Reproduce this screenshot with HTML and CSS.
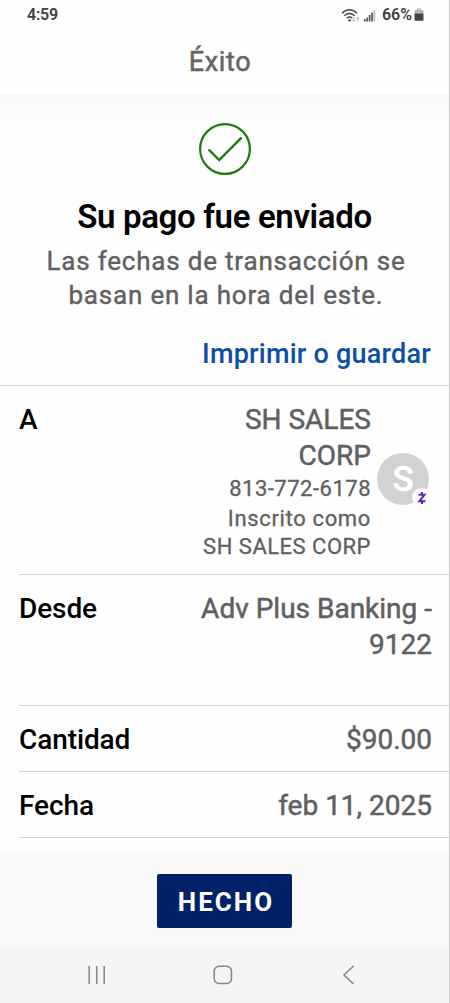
FILE: index.html
```
<!DOCTYPE html>
<html lang="es">
<head>
<meta charset="utf-8">
<title>Éxito</title>
<link rel="stylesheet" href="styles.css">
</head>
<body>
<div class="screen">
  <header class="top">
    <div class="status">
      <span class="time">4:59</span>
      <div class="indicators">
        <svg class="wifi" width="20" height="16" viewBox="0 0 20 16" fill="none" stroke="#4a4a4a" stroke-width="1.5">
          <path d="M1 5.2Q8.500-1.800 16 5.200M3.300 7.700Q8.500 3 13.700 7.700M5.700 10.200Q8.500 7.800 11.300 10.200"/>
          <circle cx="8.500" cy="12.300" r="1.200" fill="#4a4a4a" stroke="none"/>
          <path d="M12.800 9v4M11.300 11.700l1.500 1.700 1.500-1.700M16.800 13.500v-4M15.300 10.800l1.500-1.700 1.500 1.700" stroke="#b0b0b0" stroke-width="1"/>
        </svg>
        <svg class="signal" width="12" height="13" viewBox="0 0 12 13">
          <path d="M0 10h1.700v2.500H0zM2.400 8.400h1.700v4.100H2.400zM4.800 6h1.700v6.500H4.800zM7.200 3.600h1.700v8.900H7.200z" fill="#555"/>
          <path d="M9.600.7h1.700v11.800H9.600z" fill="#bbb"/>
        </svg>
        <span class="percent">66%</span>
        <svg class="battery" width="10" height="14" viewBox="0 0 10 14">
          <path d="M3 .5h4v1.500h1.200q1.300 0 1.300 1.300V6h-9V3.300Q.5 2 1.800 2H3z" fill="#b5b5b5"/>
          <path d="M.5 5.500h9v6q0 1.300-1.300 1.300H1.800Q.5 12.800.5 11.500z" fill="#444"/>
        </svg>
      </div>
    </div>
    <h1 class="page-title">Éxito</h1>
  </header>
  <main class="content">
    <section class="confirmation">
      <svg class="check" width="52" height="52" viewBox="0 0 52 52" fill="none" stroke="#217a0c">
        <circle cx="26" cy="26" r="24.900" stroke-width="2.200"/>
        <path d="M10.300 27.200 20.200 37 42 15.200" stroke-width="2.400" stroke-linecap="round"/>
      </svg>
      <h2 class="headline">Su pago fue enviado</h2>
      <p class="note">Las fechas de transacción se<br>basan en la hora del este.</p>
      <a class="print">Imprimir o guardar</a>
    </section>
    <dl class="details">
      <div class="row row-to">
        <dt class="label">A</dt>
        <dd class="value payee">
          <div class="payee-text">
            <span class="name">SH SALES<br>CORP</span>
            <span class="phone">813-772-6178</span>
            <span class="enrolled">Inscrito como</span>
            <span class="alias">SH SALES CORP</span>
          </div>
          <div class="avatar">S
            <span class="badge">
              <svg width="10" height="14" viewBox="0 0 10 14" fill="none" stroke="#6420b4" stroke-width="2">
                <path d="M1.500 3.700H7.500L2.400 10.300H8.500M5 1v2.500M5 10.500V13"/>
              </svg>
            </span>
          </div>
        </dd>
      </div>
      <div class="row row-from"><dt class="label">Desde</dt><dd class="value"><span class="account">Adv Plus Banking -</span><br>9122</dd></div>
      <div class="row"><dt class="label">Cantidad</dt><dd class="value">$90.00</dd></div>
      <div class="row"><dt class="label">Fecha</dt><dd class="value">feb 11, 2025</dd></div>
    </dl>
  </main>
  <footer class="actions"><button class="done">HECHO</button></footer>
  <nav class="navbar">
    <svg width="20" height="20" viewBox="0 0 20 20" fill="none" stroke="#858587" stroke-width="1.500"><path d="M2.200 1v18M9.700 1v18M17.200 1v18"/></svg>
    <svg width="20" height="20" viewBox="0 0 20 20" fill="none" stroke="#858587" stroke-width="1.500"><rect x="1.200" y="1.200" width="17.300" height="17.300" rx="5"/></svg>
    <svg width="20" height="20" viewBox="0 0 20 20" fill="none" stroke="#858587" stroke-width="1.500"><path d="M14.500 1 5 10l9.500 9"/></svg>
  </nav>
</div>
</body>
</html>
```
FILE: styles.css
```
* { box-sizing: border-box; }
body { margin: 0; background: #fff; font-family: Roboto, "Liberation Sans", sans-serif; font-weight: 500; color: #606060; }
.screen { width: 450px; height: 1003px; display: flex; flex-direction: column; overflow: hidden; border-right: 1px solid #c8c8c8; }
.top { height: 95px; flex: none; background: #fefefe; }
.status { height: 32px; padding: 4px 25px 0 27px; display: flex; justify-content: space-between; color: #404040; font-size: 16px; line-height: 21px; }
.time { font-weight: 600; letter-spacing: -.2px; }
.indicators { display: flex; }
.wifi { margin: 4px 3px 0 0; }
.signal { margin: 5px 6px 0 0; }
.percent { font-weight: 600; }
.battery { margin: 4px 0 0 2px; }
.page-title { margin: 12px 0 0; padding-right: 9px; text-align: center; font-size: 27px; line-height: 36px; font-weight: 400; letter-spacing: .6px; color: #666; -webkit-text-stroke: .5px; }
.content { height: 759px; flex: none; background: linear-gradient(#f7f7f7, #fbfbfb 12px, #fefefe 32px, #fefefe 756px, #fafafa); }
.confirmation { height: 291px; border-bottom: 1px solid #d0d0d0; padding-top: 28px; display: flex; flex-direction: column; align-items: center; }
.check { flex: none; }
.headline { margin: 21px 0 0; font-size: 33px; line-height: 42px; font-weight: 600; color: #000; letter-spacing: -.35px; white-space: nowrap; }
.note { margin: 6px 0 0; padding-left: 3px; font-size: 26px; line-height: 34px; font-weight: 400; text-align: center; letter-spacing: .8px; white-space: nowrap; -webkit-text-stroke: .4px; }
.print { margin: 25px 18px 0 0; align-self: flex-end; font-size: 27px; line-height: 34px; letter-spacing: .22px; color: #0d4ea6; white-space: nowrap; }
.details { margin: 0; }
.row { height: 66px; margin-left: 19px; padding: 16px 17px 0 0; display: flex; justify-content: space-between; border-bottom: 1px solid #d0d0d0; font-size: 28px; line-height: 36px; white-space: nowrap; }
.row-to { height: 189px; }
.row-from { height: 131px; }
.label { color: #000; letter-spacing: -.1px; }
.value { margin: 0; text-align: right; font-weight: 400; -webkit-text-stroke: .5px; }
.payee { display: flex; gap: 6px; margin-right: 3px; }
.payee-text { display: flex; flex-direction: column; }
.phone, .enrolled, .alias { font-size: 22px; line-height: 29px; letter-spacing: .5px; -webkit-text-stroke: .3px; }
.enrolled { position: relative; top: 1px; letter-spacing: .65px; }
.avatar { position: relative; width: 52px; height: 52px; margin-top: 51px; border-radius: 50%; background: #d2d2d2; color: #fff; text-align: center; font-size: 35px; line-height: 53px; font-weight: 500; }
.badge { position: absolute; left: 35px; top: 35px; width: 19px; height: 19px; border-radius: 50%; background: #fefefe; display: flex; align-items: center; justify-content: center; }
.actions { height: 93px; flex: none; background: #fafafa; display: flex; align-items: center; justify-content: center; }
.done { width: 135px; height: 54px; border: 0; border-radius: 2px; background: #012169; color: #fff; font: 700 26px/56px Roboto, sans-serif; letter-spacing: 2px; padding: 0 0 0 3px; }
.navbar { height: 56px; flex: none; background: #f5f5f7; display: flex; justify-content: space-between; padding: 18px 90px 0 87px; }
```
